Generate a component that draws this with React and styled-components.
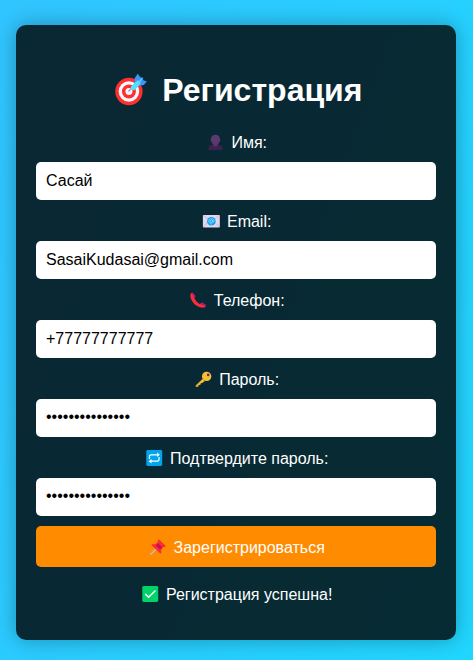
import React from "react";
import styled, { createGlobalStyle } from "styled-components";

const GlobalStyle = createGlobalStyle`
  * { box-sizing: border-box; }
  html, body { margin: 0; height: 100%; overflow: hidden; }
  body {
    font-family: "Liberation Sans", Arial, sans-serif;
    background: linear-gradient(110deg, #31c4ff 0%, #20d6ff 100%);
  }
`;

const Page = styled.main`
  display: flex;
  justify-content: center;
  height: 660px;
  padding: 25px 17px 20px 16px;
`;

const Card = styled.section`
  width: 440px;
  height: 615px;
  padding: 47px 20px 20px;
  border-radius: 10px;
  background: rgba(0, 0, 0, 0.8);
  box-shadow: 0 0 20px rgba(0, 0, 0, 0.3);
  color: #fff;
  text-align: center;
`;

const Title = styled.h1`
  margin: 0 0 24px;
  height: 37px;
  font-size: 32px;
  line-height: 37px;
  font-weight: bold;
  white-space: nowrap;
`;

const Form = styled.form`
  display: flex;
  flex-direction: column;
`;

const Label = styled.label`
  height: 19px;
  margin-bottom: 10px;
  font-size: 16px;
  line-height: 19px;
`;

const Input = styled.input`
  width: 100%;
  height: 38px;
  margin: 0 0 ${(p) => (p.$last ? 10 : 12)}px;
  padding: 0 10px ${(p) => (p.type === "password" ? 2 : 0)}px;
  border: 0;
  border-radius: 5px;
  outline: 0;
  background: #fff;
  color: #000;
  font: 16px "Liberation Sans", Arial, sans-serif;
`;

const Button = styled.button`
  height: 41px;
  padding: 2px 10px 0;
  border: 0;
  border-radius: 5px;
  background: #ff8c00;
  color: #fff;
  font: 16px "Liberation Sans", Arial, sans-serif;
`;

const Message = styled.p`
  margin: 18px 0 0;
  font-size: 16px;
  line-height: 19px;
`;

const Emoji = styled.svg`
  display: inline-block;
  width: 1.37em;
  height: 1em;
  margin: 0 0.8px 0 -0.8px;
  vertical-align: -0.14em;
  overflow: visible;
`;

const TargetIcon = () => (
  <Emoji viewBox="0 0 44 32">
    <circle cx="20" cy="18.5" r="13.7" fill="#fa312f" />
    <circle cx="20" cy="18.5" r="10.3" fill="#f7f5fa" />
    <circle cx="20" cy="18.5" r="7" fill="#fa312f" />
    <circle cx="20" cy="18.5" r="3.5" fill="#f7f5fa" />
    <path d="M19.5 18.5 26 12" stroke="#a79aaf" strokeWidth="1.4" />
    <path d="M25.5 12 25.8 5.2 28.8.8 31.6 4.5 33.5 4.2 34.5 5.3 33.9 7 38 8.5 35 12.1 30 12.8Z" fill="#3f93fa" />
    <path d="M21.6 15.5C22 12.8 24.5 11.2 26.5 9.3L29 7.2 32 10 30 12.5C28 15 26.5 17.3 23.5 17.5Z" fill="#50e2ff" />
    <path d="m28 11 5-5" stroke="#50e2ff" strokeWidth="1.3" />
  </Emoji>
);

const PersonIcon = () => (
  <Emoji viewBox="0 0 22 16">
    <path d="M4.6 16v-1.8c0-2 1.5-3 3.800-3.400h6.200c2.300.4 3.800 1.400 3.800 3.400V16Z" fill="#3d2250" />
    <path d="M9.200 8h4.600v3.600l-2.300 1.800-2.300-1.800Z" fill="#50315f" />
    <path d="M7 5.200C6.800 2.200 8.700.6 11.500.6S16.200 2.200 16 5.200c.8.400.5 2.100-.4 2.400-.6 2.200-2 3.600-4.100 3.600S8 9.800 7.400 7.600C6.500 7.300 6.200 5.600 7 5.200Z" fill="#5b3a70" />
  </Emoji>
);

const MailIcon = () => (
  <Emoji viewBox="0 0 22 16">
    <rect x="2.9" y="2" width="17" height="12.5" rx=".7" fill="#e1d8ec" />
    <path d="m3.300 14 5.500-5.500M19.300 14l-5.500-5.500M3.300 2.500l8 6 8-6" fill="none" stroke="#c3b4d2" strokeWidth=".8" />
    <circle cx="11.4" cy="8.2" r="4.3" fill="#0f9df0" />
    <circle cx="11.4" cy="8.2" r="1.4" fill="none" stroke="#b6ecff" strokeWidth=".8" />
    <path d="M12.900 6.700v2.200c.4.9 1.300.3 1.200-.7C14.100 4.500 8.700 4.500 8.700 8.200c0 2.400 2 3.100 3.700 2.600" fill="none" stroke="#86dfff" strokeWidth=".7" />
  </Emoji>
);

const PhoneIcon = () => (
  <Emoji viewBox="0 0 22 16">
    <path d="M4.700.7C3.200 1.700 3 3.700 3.700 6c1.400 4.300 4.800 8 9.500 9.300 2.400.7 4.500.5 5.500-.8L15.200 11l-2.500 1C10.200 10.500 8.200 8.300 7.200 5.700L8.200 3.500Z" fill="#fb2d37" />
    <path d="M4.700.7c.5-.4 1-.3 1.400.2l2.300 3c.4.6.2 1.200-.3 1.500l-.9.400Z" fill="#ad1e78" />
    <path d="m13 11.900 1.500-1.200c.5-.4 1-.3 1.500.1l2.800 2c.6.5.5 1.100-.1 1.700Z" fill="#ad1e78" />
  </Emoji>
);

const KeyIcon = () => (
  <Emoji viewBox="0 0 22 16">
    <path d="M10.500 8 3.700 14.600v1.100h2.500l.5-1.600 1.800-.2.300-1.700 1.400-.1L13 10Z" fill="#f9bd36" />
    <circle cx="14.7" cy="5.4" r="4.7" fill="#f9bd36" />
    <path d="M10.100 8.800 4.500 14.700" stroke="#df9a25" strokeWidth=".7" />
    <circle cx="16.3" cy="3.9" r="1.3" fill="#493447" />
  </Emoji>
);

const RepeatIcon = () => (
  <Emoji viewBox="0 0 22 16">
    <rect x="3.3" y="0" width="16" height="16" rx="1.5" fill="#00a6ed" />
    <path d="M6.500 9V6.500c0-1 .7-1.700 1.700-1.700h7.100M16.100 7v2.500c0 1-.7 1.700-1.700 1.700H7.300" fill="none" stroke="#fff" strokeWidth="1.2" />
    <path d="m14.100 2.600 2.800 2.200-2.800 2.200ZM8.500 9 5.700 11.200l2.800 2.200Z" fill="#fff" />
  </Emoji>
);

const PinIcon = () => (
  <Emoji viewBox="0 0 22 16">
    <g transform="translate(.9 0)">
      <path d="m3.500 15.700 6-6" stroke="#c9bfd1" strokeWidth="1.3" />
      <path d="m12.400.6 6.400 6.200c.4.6-.1 1.300-.8 1.200l-1.500.1-2.200 2.800.2 2.800c0 .9-.8 1.200-1.400.6L4.900 6.600c-.6-.6-.2-1.400.6-1.400l2.800.1L11 3V1.300c0-.8.8-1.200 1.400-.7Z" fill="#f92f38" />
      <path d="M11 4.200 15.300 8l-2 2.500-4.200-4Z" fill="#c9104b" />
    </g>
  </Emoji>
);

const CheckIcon = () => (
  <Emoji viewBox="0 0 22 16">
    <rect x="3.3" y="0" width="16" height="16" rx="1.5" fill="#00d26a" />
    <path d="m6.600 8.300 3 3 6.500-6.300" fill="none" stroke="#fff" strokeWidth="1.4" strokeLinecap="round" />
  </Emoji>
);

const fields = [
  { id: "name", label: "Имя:", Icon: PersonIcon, type: "text", value: "Сасай" },
  { id: "email", label: "Email:", Icon: MailIcon, type: "text", value: "SasaiKudasai@gmail.com" },
  { id: "phone", label: "Телефон:", Icon: PhoneIcon, type: "text", value: "+77777777777" },
  { id: "password", label: "Пароль:", Icon: KeyIcon, type: "password", value: "sasaikudasai777" },
  { id: "confirm", label: "Подтвердите пароль:", Icon: RepeatIcon, type: "password", value: "sasaikudasai777" },
];

export default function App() {
  return (
    <>
      <GlobalStyle />
      <Page>
        <Card>
          <Title><TargetIcon /> Регистрация</Title>
          <Form onSubmit={(e) => e.preventDefault()}>
            {fields.map(({ id, label, Icon, type, value }, i) => (
              <React.Fragment key={id}>
                <Label htmlFor={id}><Icon /> {label}</Label>
                <Input id={id} type={type} defaultValue={value} spellCheck={false} $last={i === fields.length - 1} />
              </React.Fragment>
            ))}
            <Button type="submit"><PinIcon /> Зарегистрироваться</Button>
          </Form>
          <Message><CheckIcon /> Регистрация успешна!</Message>
        </Card>
      </Page>
    </>
  );
}
